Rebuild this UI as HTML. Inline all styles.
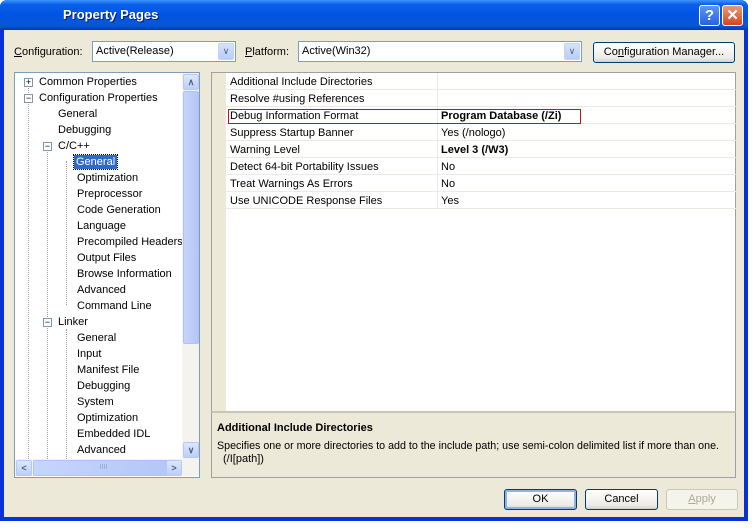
<!DOCTYPE html>
<html><head><style>
*{margin:0;padding:0;box-sizing:border-box}
body{width:754px;height:530px;background:#fff;font-family:"Liberation Sans",sans-serif;font-size:11px;color:#000;position:relative;overflow:hidden}
.win{position:absolute;left:0;top:0;width:748px;height:521px;background:#0831d9;border-radius:7px 7px 0 0}
.title{position:absolute;left:0;top:0;width:748px;height:30px;border-radius:7px 7px 0 0;background:linear-gradient(#3d95ff 0%,#0a5fe8 15%,#0054e3 50%,#0a57d8 85%,#0038b8 100%)}
.title span{position:absolute;left:63px;top:7px;color:#fff;font-weight:bold;font-size:13px;text-shadow:1px 1px #0a1f6a}
.client{position:absolute;left:4px;top:30px;width:740px;height:487px;background:#ece9d8}
.a{position:absolute}
.combo{position:absolute;height:21px;background:#fff;border:1px solid #7f9db9;padding:3px 3px}
.dd{position:absolute;right:1px;top:1px;width:16px;height:17px;background:linear-gradient(#d7e2fb,#b8cdf7);border:1px solid #c3d3fd;border-radius:2px;color:#4d6185;font-size:9px;text-align:center;line-height:15px}
.btn{position:absolute;height:21px;border:1px solid #003c74;border-radius:3px;background:linear-gradient(#fff,#ecebe6 80%,#d6d0c5);text-align:center;line-height:19px}
.tree{position:absolute;left:14px;top:72px;width:186px;height:406px;background:#fff;border:1px solid #7f9db9}
.ti{position:absolute;white-space:nowrap;line-height:14px}
.grid{position:absolute;left:211px;top:72px;width:525px;height:339px;background:#fff;border:1px solid #a0a0a0;border-bottom:none}
.row{position:absolute;left:14px;width:510px;height:17px;border-bottom:1px solid #eceae2}
.row .n{position:absolute;left:4px;top:3px}
.row .v{position:absolute;left:211px;top:0;width:299px;height:17px;padding-top:3px;padding-left:3px;border-left:1px solid #eceae2}
.desc{position:absolute;left:211px;top:411px;width:525px;height:67px;border:1px solid #a0a0a0;border-top:2px solid #c8c5b8;background:#ece9d8}
.sb{position:absolute;background:linear-gradient(90deg,#c6d5fb,#b3c6f6);border:1px solid #b0c3f0;border-radius:2px}
.arr{position:absolute;width:16px;height:16px;background:linear-gradient(#dde7fd,#bccef8);border:1px solid #b5c9f6;border-radius:2px;color:#4d6185;font-size:9px;text-align:center;line-height:14px;font-weight:bold}
.pm{position:absolute;width:9px;height:9px;border:1px solid #7a98af;background:#fff;font-size:9px;line-height:6px;text-align:center;color:#000}
</style></head><body>
<div class="win">
<div class="title"><span>Property Pages</span>
<div class="a" style="left:699px;top:5px;width:21px;height:21px;border:1px solid #fff;border-radius:3px;background:linear-gradient(#5a95f8,#2663e0);color:#fff;font-weight:bold;font-size:15px;text-align:center;line-height:19px">?</div>
<div class="a" style="left:722px;top:5px;width:21px;height:21px;border:1px solid #fff;border-radius:3px;background:linear-gradient(#e79a7e,#d3461f);color:#fff;font-weight:bold;font-size:15px;text-align:center;line-height:19px">✕</div>
</div>
<div class="client"></div>
</div>

<div class="a" style="left:14px;top:46px"><u>C</u>onfiguration:</div>
<div class="combo" style="left:92px;top:41px;width:144px">Active(Release)<div class="dd">&#8744;</div></div>
<div class="a" style="left:245px;top:46px"><u>P</u>latform:</div>
<div class="combo" style="left:298px;top:41px;width:284px">Active(Win32)<div class="dd">&#8744;</div></div>
<div class="btn" style="left:593px;top:42px;width:142px">Co<u>n</u>figuration Manager...</div>

<div class="tree">
<div class="a" style="left:13px;top:8px;width:0;height:384px;border-left:1px dotted #a0a0a0"></div>
<div class="a" style="left:32px;top:72px;width:0;height:320px;border-left:1px dotted #a0a0a0"></div>
<div class="pm" style="left:9px;top:5px">+</div>
<div class="ti" style="left:24px;top:2px">Common Properties</div>
<div class="pm" style="left:9px;top:21px">−</div>
<div class="ti" style="left:24px;top:18px">Configuration Properties</div>
<div class="ti" style="left:43px;top:34px">General</div>
<div class="ti" style="left:43px;top:50px">Debugging</div>
<div class="pm" style="left:28px;top:69px">−</div>
<div class="ti" style="left:43px;top:66px">C/C++</div>
<div class="a" style="left:51px;top:88px;width:0;height:144px;border-left:1px dotted #a0a0a0"></div>
<div class="ti" style="left:61px;top:82px;background:#316ac5;color:#fff;padding:0 2px;margin-left:-2px;outline:1px dotted #000">General</div>
<div class="ti" style="left:62px;top:98px">Optimization</div>
<div class="ti" style="left:62px;top:114px">Preprocessor</div>
<div class="ti" style="left:62px;top:130px">Code Generation</div>
<div class="ti" style="left:62px;top:146px">Language</div>
<div class="ti" style="left:62px;top:162px">Precompiled Headers</div>
<div class="ti" style="left:62px;top:178px">Output Files</div>
<div class="ti" style="left:62px;top:194px">Browse Information</div>
<div class="ti" style="left:62px;top:210px">Advanced</div>
<div class="ti" style="left:62px;top:226px">Command Line</div>
<div class="pm" style="left:28px;top:245px">−</div>
<div class="ti" style="left:43px;top:242px">Linker</div>
<div class="a" style="left:51px;top:256px;width:0;height:136px;border-left:1px dotted #a0a0a0"></div>
<div class="ti" style="left:62px;top:258px">General</div>
<div class="ti" style="left:62px;top:274px">Input</div>
<div class="ti" style="left:62px;top:290px">Manifest File</div>
<div class="ti" style="left:62px;top:306px">Debugging</div>
<div class="ti" style="left:62px;top:322px">System</div>
<div class="ti" style="left:62px;top:338px">Optimization</div>
<div class="ti" style="left:62px;top:354px">Embedded IDL</div>
<div class="ti" style="left:62px;top:370px">Advanced</div>
<div class="a" style="left:167px;top:0;width:17px;height:387px;background:#f4f3ee"></div>
<div class="arr" style="left:168px;top:1px">&#8743;</div>
<div class="sb" style="left:168px;top:18px;width:16px;height:253px"></div>
<div class="arr" style="left:168px;top:369px">&#8744;</div>
<div class="a" style="left:0;top:386px;width:184px;height:17px;background:#f4f3ee"></div>
<div class="arr" style="left:1px;top:387px">&lt;</div>
<div class="sb" style="left:18px;top:387px;width:141px;height:16px;text-align:center;color:#8aa4d6;font-size:7px;line-height:14px">IIII</div>
<div class="arr" style="left:151px;top:387px">&gt;</div>
</div>

<div class="grid">
<div class="a" style="left:0;top:0;width:14px;height:338px;background:#ece9d8"></div>
<div class="row" style="top:0"><div class="n">Additional Include Directories</div><div class="v"></div></div>
<div class="row" style="top:17px"><div class="n">Resolve #using References</div><div class="v"></div></div>
<div class="row" style="top:34px"><div class="n">Debug Information Format</div><div class="v" style="font-weight:bold">Program Database (/Zi)</div></div>
<div class="row" style="top:51px"><div class="n">Suppress Startup Banner</div><div class="v">Yes (/nologo)</div></div>
<div class="row" style="top:68px"><div class="n">Warning Level</div><div class="v" style="font-weight:bold">Level 3 (/W3)</div></div>
<div class="row" style="top:85px"><div class="n">Detect 64-bit Portability Issues</div><div class="v">No</div></div>
<div class="row" style="top:102px"><div class="n">Treat Warnings As Errors</div><div class="v">No</div></div>
<div class="row" style="top:119px"><div class="n">Use UNICODE Response Files</div><div class="v">Yes</div></div>
<div class="a" style="left:16px;top:36px;width:353px;height:15px;border:1px solid #c8101a"></div>
</div>

<div class="desc">
<div class="a" style="left:5px;top:9px;font-weight:bold">Additional Include Directories</div>
<div class="a" style="left:5px;top:27px;white-space:nowrap;font-size:10.7px">Specifies one or more directories to add to the include path; use semi-colon delimited list if more than one.</div>
<div class="a" style="left:11px;top:40px">(/I[path])</div>
</div>

<div class="btn" style="left:504px;top:489px;width:73px;border-color:#003c74;box-shadow:inset 0 0 0 2px #8fb2ec">OK</div>
<div class="btn" style="left:585px;top:489px;width:73px">Cancel</div>
<div class="btn" style="left:666px;top:489px;width:72px;border-color:#c9c7ba;color:#aca899;background:#f5f4ea"><u>A</u>pply</div>
</body></html>
